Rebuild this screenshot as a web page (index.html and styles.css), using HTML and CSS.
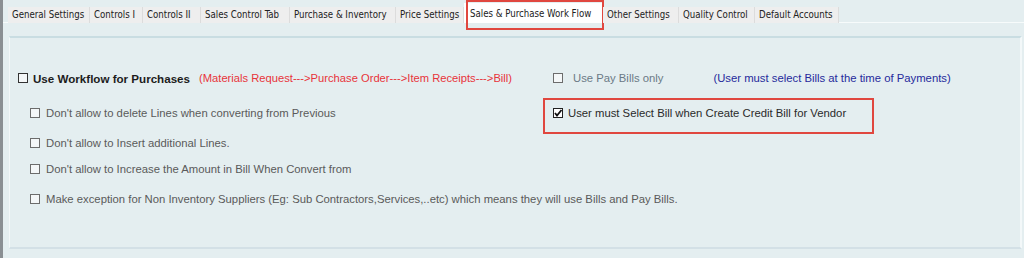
FILE: index.html
```html
<!DOCTYPE html>
<html lang="en">
<head>
  <meta charset="UTF-8" />
  <title>Sales & Purchase Work Flow</title>
  <link rel="stylesheet" href="styles.css">
</head>
<body>

  <div class="window">
    <!-- Tab strip -->
    <div class="tabs">
      <div class="tab">General Settings</div>
      <div class="tab">Controls I</div>
      <div class="tab">Controls II</div>
      <div class="tab">Sales Control Tab</div>
      <div class="tab">Purchase &amp; Inventory</div>
      <div class="tab">Price Settings</div>
      <div class="tab active">Sales &amp; Purchase Work Flow</div>
      <div class="tab">Other Settings</div>
      <div class="tab">Quality Control</div>
      <div class="tab">Default Accounts</div>
    </div>

    <div class="panel">
      <div class="group">
        <div class="row first">
          <label class="option main">
            <span class="box"></span>
            <b>Use Workflow for Purchases</b>
            <span class="note-red">(Materials Request---&gt;Purchase Order---&gt;Item Receipts---&gt;Bill)</span>
          </label>
          <label class="option">
            <span class="box"></span>
            <span class="pay">Use Pay Bills only</span>
            <span class="note-blue">(User must select Bills at the time of Payments)</span>
          </label>
        </div>

        <div class="row second">
          <label class="option sub">
            <span class="box"></span>
            Don't allow to delete Lines when converting from Previous
          </label>
          <label class="option checked callout">
            <span class="box">
              <svg width="10" height="10" viewBox="0 0 10 10"><path d="M2 5 L4 7.5 L8.5 2" fill="none" stroke="#111" stroke-width="1.8"/></svg>
            </span>
            User must Select Bill when Create Credit Bill for Vendor
          </label>
        </div>

        <div class="row third">
          <label class="option sub">
            <span class="box"></span>
            Don't allow to Insert additional Lines.
          </label>
        </div>

        <div class="row fourth">
          <label class="option sub">
            <span class="box"></span>
            Don't allow to Increase the Amount in Bill When Convert from
          </label>
        </div>

        <div class="row fifth">
          <label class="option sub wide">
            <span class="box"></span>
            Make exception for Non Inventory Suppliers (Eg: Sub Contractors,Services,..etc) which means they will use Bills and Pay Bills.
          </label>
        </div>
      </div>
    </div>
  </div>

</body>
</html>
```

FILE: styles.css
```css
* {
  box-sizing: border-box;
}

body {
  margin: 0;
  padding: 0;
  font-family: 'Liberation Sans', Arial, sans-serif;
  font-size: 11.3px;
  background: #e4eef0;
  color: #555;
  overflow: hidden;
}

.window {
  height: 258px;
  border-left: 3px solid #8a8f93;
  background: #e4eef0;
}

/* Tabs */
.tabs {
  display: flex;
  padding: 7px 0 0 5px;
  height: 23px;
  border-bottom: 1px solid #f7fbfb;
}

.tab {
  position: relative;
  height: 16px;
  line-height: 15px;
  padding: 0 4px;
  background: #eeeeee;
  border-right: 1px solid #dcdcdc;
  color: #222;
  font-family: 'DejaVu Sans Condensed', 'Liberation Sans Narrow', sans-serif;
  font-size: 9.6px;
  white-space: nowrap;
}

.tab:nth-child(1) { width: 82px; }
.tab:nth-child(2) { width: 53px; }
.tab:nth-child(3) { width: 58px; }
.tab:nth-child(4) { width: 89px; }
.tab:nth-child(5) { width: 106px; }
.tab:nth-child(6) { width: 68px; }
.tab:nth-child(7) { width: 139px; }
.tab:nth-child(8) { width: 76px; }
.tab:nth-child(9) { width: 76px; }
.tab:nth-child(10) { width: 84px; }

.tab.active {
  background: #ffffff;
  margin-top: -4px;
  height: 20px;
  line-height: 22px;
  padding-left: 6px;
}

.tab.active::after {
  content: "";
  position: absolute;
  left: 2px;
  top: -3px;
  right: -2px;
  bottom: -7px;
  border: 2px solid #e0473f;
}

/* Panel and group box */
.panel {
  padding: 13px 2px 0 6px;
}

.group {
  height: 213px;
  border-top: 2px solid #c9dde2;
  border-left: 1px solid #f3f8f9;
  border-right: 2px solid #f3f8f9;
  border-bottom: 2px solid #d3e0e6;
  padding-left: 8px;
  background: #e4eef0;
}

.row {
  display: grid;
  grid-template-columns: 535px 1fr;
  align-items: center;
  height: 16px;
}

.row.first { margin-top: 32px; }
.row.second { margin-top: 19px; }
.row.third { margin-top: 14px; }
.row.fourth { margin-top: 10px; }
.row.fifth { margin-top: 14px; }

.option {
  display: flex;
  align-items: center;
  white-space: nowrap;
  color: #5a5a5a;
}

.option.sub {
  padding-left: 12px;
}

.option.wide {
  grid-column: 1 / -1;
}

.box {
  display: inline-flex;
  flex-shrink: 0;
  width: 10px;
  height: 10px;
  border: 1px solid #6c6c6c;
  background: #f4f7f8;
  margin-right: 6px;
}

.box svg {
  margin: -1px;
}

.main .box {
  border-color: #333;
  margin-right: 5px;
}

.main b {
  color: #1c1c1c;
  font-size: 11.6px;
  margin-right: 9px;
}

.note-red {
  color: #e8343a;
  font-size: 11.2px;
}

.pay {
  color: #6b7a86;
  margin-left: 4px;
  margin-right: 50px;
}

.note-blue {
  color: #262a9c;
}

.checked {
  position: relative;
  color: #2a2a2a;
}

.checked .box {
  border-color: #222;
  background: #fff;
  margin-right: 5px;
}

.callout::after {
  content: "";
  position: absolute;
  left: -10px;
  top: -9px;
  width: 327px;
  height: 32px;
  border: 2px solid #e0473f;
}
```
